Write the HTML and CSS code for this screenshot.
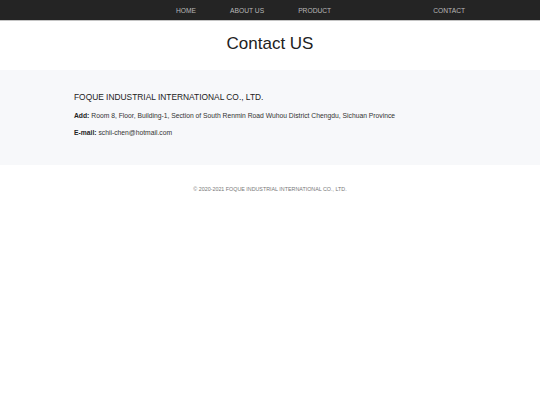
FILE: index.html
```html
<!DOCTYPE html>
<html>
<head>
<meta charset="utf-8">
<link rel="stylesheet" href="styles.css">
</head>
<body>
<header class="nav">
  <nav class="nav-list">
    <a class="nav-item">HOME</a>
    <a class="nav-item">ABOUT US</a>
    <a class="nav-item">PRODUCT</a>
    <span class="nav-spacer"></span>
    <a class="nav-item">CONTACT</a>
  </nav>
</header>
<section class="title-band">
  <h1 class="title">Contact US</h1>
</section>
<section class="info">
  <div class="info-inner">
    <h2 class="company">FOQUE INDUSTRIAL INTERNATIONAL CO., LTD.</h2>
    <p class="line"><b>Add:</b> Room 8, Floor, Building-1, Section of South Renmin Road Wuhou District Chengdu, Sichuan Province</p>
    <p class="line"><b>E-mail:</b> schii-chen@hotmail.com</p>
  </div>
</section>
<footer class="footer">© 2020-2021 FOQUE INDUSTRIAL INTERNATIONAL CO., LTD.</footer>
</body>
</html>
```

FILE: styles.css
```css
* { box-sizing: border-box; }
body {
  margin: 0;
  font-family: "Liberation Sans", Arial, sans-serif;
  background: #fff;
  color: #222;
}
.nav {
  height: 21px;
  background: #242424;
  border-bottom: 1px solid #c4c4c4;
}
.nav-list {
  display: flex;
  gap: 34px;
  padding-left: 176px;
  height: 20px;
  align-items: center;
}
.nav-item {
  font-size: 6.7px;
  color: #b8b8b8;
  text-decoration: none;
}
.nav-spacer { width: 34px; }
.title-band {
  height: 49px;
  display: flex;
  justify-content: center;
}
.title {
  margin: 0;
  margin-top: 13px;
  font-size: 17px;
  font-weight: normal;
  color: #222;
  line-height: 20px;
}
.info {
  background: #f7f8fa;
  height: 95px;
}
.info-inner {
  padding: 21px 0 0 74px;
}
.company {
  margin: 0 0 9px;
  font-size: 8.4px;
  font-weight: normal;
  color: #222;
  line-height: 12px;
}
.line {
  margin: 0 0 9px;
  font-size: 6.75px;
  line-height: 8px;
  color: #333;
}
.line b { color: #222; }
.footer {
  text-align: center;
  font-size: 5.35px;
  color: #777;
  padding-top: 21px;
}
```
